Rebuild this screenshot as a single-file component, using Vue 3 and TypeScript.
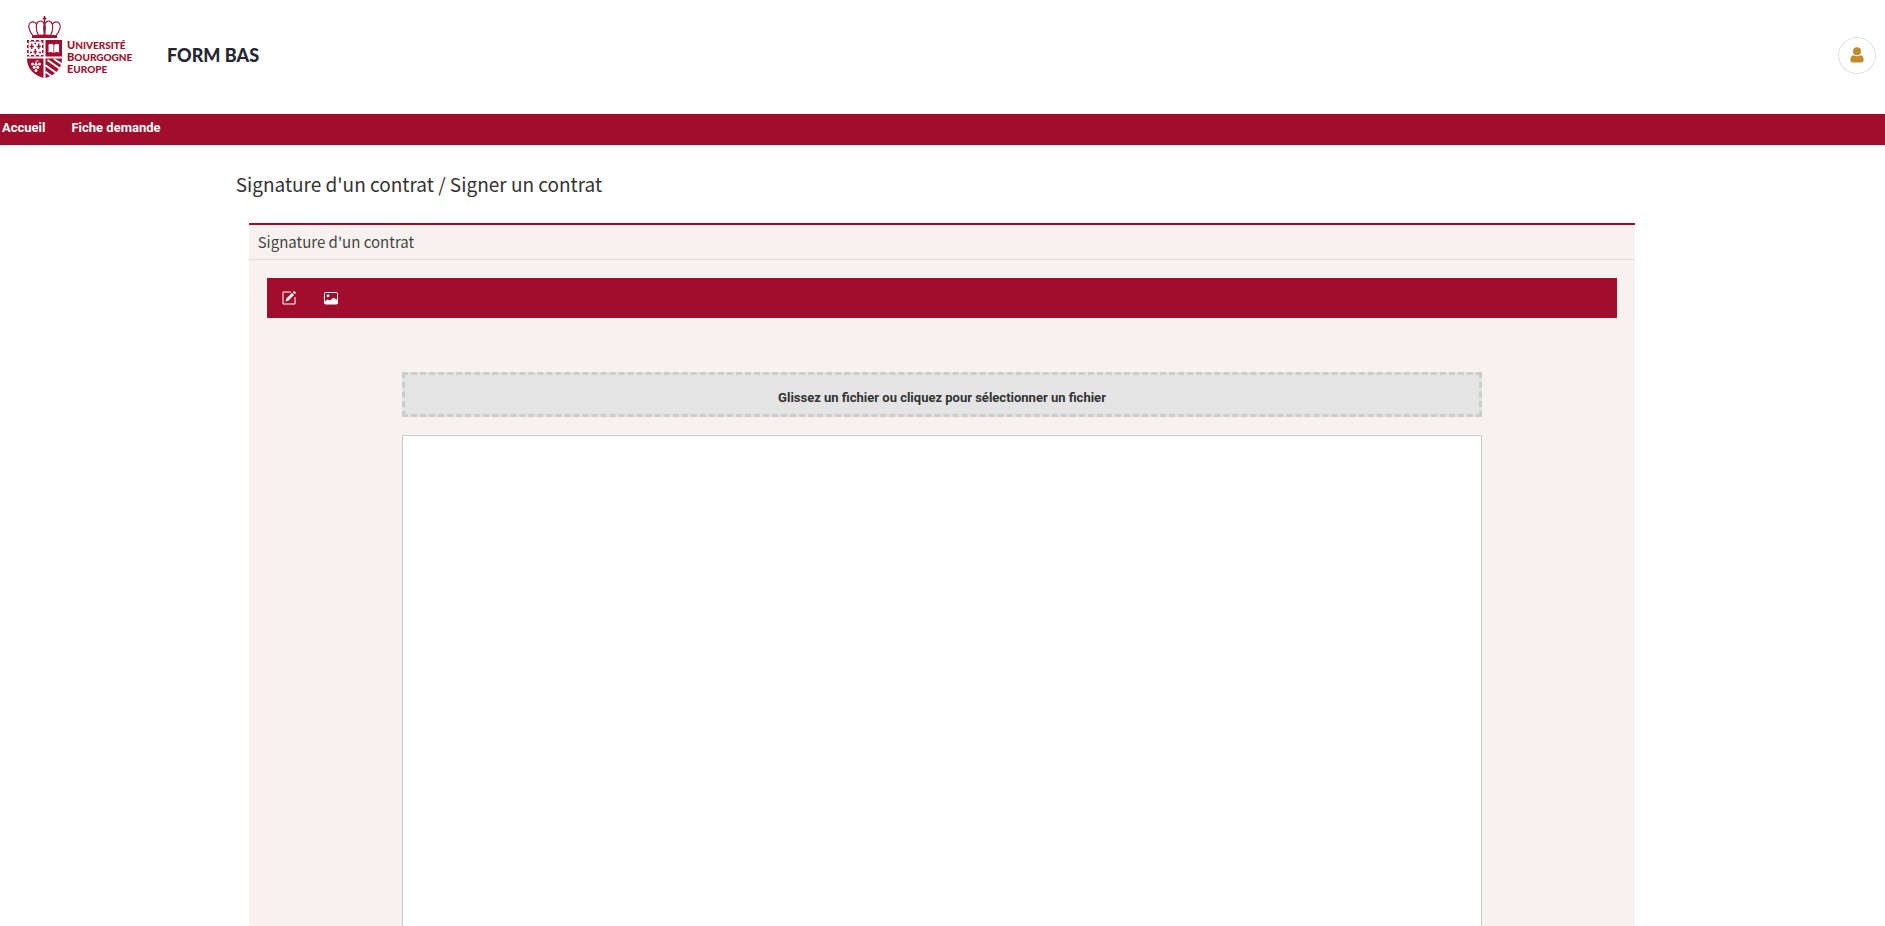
<script setup lang="ts">
import { ref } from 'vue'

interface NavLink {
  label: string
  href: string
}

const navLinks: NavLink[] = [
  { label: 'Accueil', href: '#accueil' },
  { label: 'Fiche demande', href: '#fiche-demande' },
]

const pickedFile = ref<File | null>(null)

function keepFile(file: File | undefined): void {
  pickedFile.value = file ?? null
}

function onPick(event: Event): void {
  keepFile((event.target as HTMLInputElement).files?.[0])
}

function onDrop(event: DragEvent): void {
  keepFile(event.dataTransfer?.files[0])
}
</script>

<template>
  <div class="page">
    <header class="header">
      <a class="brand" href="#accueil">
        <svg class="crest" viewBox="0 0 35 62" aria-hidden="true">
          <g fill="none" stroke="#a10e2d" stroke-width="1.1">
            <path d="M6 19.500C2 15 0.800 10 2.600 7.500C4.500 5 8 5.400 9.600 8.200" />
            <path d="M29 19.500C33 15 34.200 10 32.400 7.500C30.500 5 27 5.400 25.400 8.200" />
            <path d="M11.500 19.500C8.500 14 8.500 7.500 11.500 5.500C14.200 4 16.500 6 17.500 8.500" />
            <path d="M23.500 19.500C26.500 14 26.500 7.500 23.500 5.500C20.800 4 18.500 6 17.500 8.500" />
            <path d="M17.500 0V20M15.700 2.600H19.300" stroke-width="1.500" />
          </g>
          <path d="M17.500 4L18.900 12L17.900 20H17.100L16.100 12Z" fill="#a10e2d" />
          <path d="M5 19.200Q17.500 17.800 30 19.200V22H5Z" fill="#a10e2d" />
          <path d="M0 24H16.500V40.500H0ZM18.500 24H35V40.500H18.500Z" fill="#a10e2d" />
          <path d="M0 42.500H16.500V62C7 59 0 53 0 42.500ZM18.500 42.500H35C35 53 28 59 18.500 62Z" fill="#a10e2d" />
          <path d="M1.600 25.600H15V39H1.600Z" fill="#fff" />
          <path
            d="M3 24V25.600M8 24V25.600M13 24V25.600M3 39V40.500M8 39V40.500M13 39V40.500M0 28H1.600M0 33H1.600M0 38H1.600M15 28H16.500M15 33H16.500M15 38H16.500"
            stroke="#fff"
            stroke-width="1.800"
          />
          <g fill="none" stroke="#a10e2d" stroke-width="1.300">
            <path d="M4.800 27.500V33M2.800 30.500H6.800M11.800 27.500V33M9.800 30.500H13.800M8.300 33V38.500M6.300 35.800H10.300" />
            <path d="M3 36.500H5M12 36.500H14M7.500 27.500H9" />
          </g>
          <path d="M21.500 28.500Q24.500 27 26.500 29V37Q24.500 35.500 21.500 36.500ZM32 28.500Q29 27 27.200 29V37Q29 35.500 32 36.500Z" fill="#fff" />
          <g fill="#fff">
            <circle cx="5.500" cy="48" r="1.500" /><circle cx="9" cy="48.300" r="1.500" /><circle cx="12.500" cy="48" r="1.500" />
            <circle cx="7.200" cy="51.300" r="1.500" /><circle cx="10.700" cy="51.300" r="1.500" /><circle cx="9" cy="54.400" r="1.500" />
          </g>
          <path d="M9 48V45.200L11.500 44.800" fill="none" stroke="#fff" stroke-width="0.900" />
          <path d="M20.500 44L34 53.500M27 43L35 48.500M18.500 49.300L30 57.500M18.500 55.800L25 60.500" fill="none" stroke="#fff" stroke-width="2" />
        </svg>
        <span class="brand-name">
          <span>Université</span>
          <span>Bourgogne</span>
          <span>Europe</span>
        </span>
      </a>
      <span class="app-name">FORM BAS</span>
      <button class="account" type="button" aria-label="Mon compte">
        <svg viewBox="0 0 14 16" aria-hidden="true">
          <circle cx="7" cy="4.200" r="4" fill="#c08b2b" />
          <path d="M3.300 8.200Q7 10.400 10.700 8.200Q13.600 9 13.600 12.600V13.500Q13.600 15.600 11.600 15.600H2.400Q0.400 15.600 0.400 13.500V12.600Q0.400 9 3.300 8.200Z" fill="#c08b2b" />
        </svg>
      </button>
    </header>

    <nav class="nav">
      <a v-for="link in navLinks" :key="link.href" :href="link.href">{{ link.label }}</a>
    </nav>

    <main class="content">
      <h1>Signature d'un contrat / Signer un contrat</h1>
      <section class="panel">
        <h2>Signature d'un contrat</h2>
        <div class="panel-body">
          <div class="toolbar">
            <button type="button" aria-label="Signer">
              <svg viewBox="0 0 14 14" aria-hidden="true">
                <path d="M9 1H1V13H13V6" fill="none" stroke="#fff" stroke-width="1" />
                <path d="M3.500 10.500L4.200 7.800L10 2L12 4L6.200 9.800ZM10.700 1.300L11.700 0.300Q12.200 0 12.700 0.400L13.600 1.300Q14 1.800 13.700 2.300L12.700 3.300Z" fill="#fff" />
              </svg>
            </button>
            <button type="button" aria-label="Ajouter une image">
              <svg viewBox="0 0 14 14" aria-hidden="true">
                <rect x="0.500" y="1.500" width="13" height="11.500" rx="1" fill="none" stroke="#fff" />
                <circle cx="4" cy="4.800" r="1.400" fill="#fff" />
                <path d="M1 10.500L3.500 8.500L5.800 9.600L9.500 6.800L13.500 9V13H1Z" fill="#fff" />
              </svg>
            </button>
          </div>
          <div class="workspace">
            <label class="dropzone" @dragover.prevent @drop.prevent="onDrop">
              Glissez un fichier ou cliquez pour sélectionner un fichier
              <input type="file" @change="onPick" />
            </label>
            <div class="viewer"></div>
          </div>
        </div>
      </section>
    </main>
  </div>
</template>

<style>
body {
  margin: 0;
  background: #fff;
}
</style>

<style scoped>
.page {
  height: 100vh;
  overflow: hidden;
  display: flex;
  flex-direction: column;
  font-family: Roboto, 'Liberation Sans', sans-serif;
  color: #333;
}
.header {
  flex: none;
  box-sizing: border-box;
  height: 114px;
  padding: 16px 9px 0 27px;
  display: flex;
  align-items: flex-start;
}
.brand {
  display: flex;
  width: 140px;
  color: #a10e2d;
  text-decoration: none;
}
.crest {
  width: 35px;
  height: 62px;
}
.brand-name {
  display: flex;
  flex-direction: column;
  padding: 23px 0 0 5px;
  font: 900 10px/12px Lato, sans-serif;
  text-transform: uppercase;
}
.brand-name span::first-letter {
  font-size: 11px;
}
.app-name {
  margin-top: 28px;
  font: 900 18px/22px Lato, sans-serif;
  color: #252833;
}
.account {
  margin: 21px 0 0 auto;
  width: 38px;
  height: 37px;
  padding: 0;
  display: flex;
  align-items: center;
  justify-content: center;
  border: 1px solid #dcdee6;
  border-radius: 50%;
  background: #fff;
  cursor: pointer;
}
.account svg {
  width: 14px;
  height: 16px;
  margin-bottom: 2px;
}
.nav {
  flex: none;
  box-sizing: border-box;
  height: 31px;
  padding: 6px 2px 0;
  display: flex;
  gap: 26px;
  background: #a10e2d;
}
.nav a {
  font-size: 13px;
  line-height: 16px;
  font-weight: 700;
  color: #fff;
  text-decoration: none;
}
.content {
  flex: 1;
  min-height: 0;
  box-sizing: border-box;
  width: 75%;
  margin: 0 auto;
  display: flex;
  flex-direction: column;
}
h1,
h2 {
  margin: 0;
  font-family: 'Noto Sans CJK SC', 'Noto Sans', sans-serif;
  font-weight: 400;
}
h1 {
  font-size: 19px;
  line-height: 30px;
  padding: 24px 0;
}
.panel {
  flex: none;
  margin: 0 14px 0 13px;
  border-top: 2px solid #a10e2d;
  background: #f7f2ef;
}
h2 {
  padding: 5px 9px;
  border-bottom: 1px solid #dfdcda;
  font-size: 15px;
  line-height: 24px;
  color: #444;
}
.panel-body {
  padding: 18px;
}
.toolbar {
  box-sizing: border-box;
  height: 40px;
  padding: 0 15px;
  display: flex;
  align-items: center;
  gap: 28px;
  background: #a10e2d;
}
.toolbar button {
  width: 14px;
  height: 14px;
  padding: 0;
  border: 0;
  background: none;
  cursor: pointer;
}
.toolbar svg {
  display: block;
  width: 14px;
  height: 14px;
}
.workspace {
  width: 80%;
  margin: 54px auto 0;
}
.dropzone {
  display: block;
  box-sizing: border-box;
  height: 45px;
  padding-top: 15px;
  border: 3px dashed #ccc;
  background: #e4e4e4;
  font-size: 13px;
  line-height: 16px;
  font-weight: 700;
  text-align: center;
  cursor: pointer;
}
.dropzone input {
  display: none;
}
.viewer {
  margin-top: 18px;
  height: 100vh;
  border: 1px solid #ccc;
  background: #fefefe;
}
</style>
